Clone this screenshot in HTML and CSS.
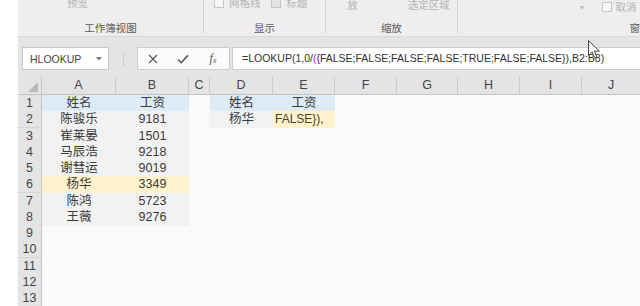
FILE: index.html
```html
<!DOCTYPE html>
<html lang="zh-CN">
<head>
    <meta charset="UTF-8">
    <meta name="viewport" content="width=device-width, initial-scale=1.0">
    <title>LOOKUP 查找工资</title>
    <link rel="stylesheet" href="styles.css">
</head>
<body>
<div class="window">
    <div class="ribbon">
        <div class="group g-view">
            <div class="items"><span class="item">预览</span></div>
            <div class="group-label">工作簿视图</div>
        </div>
        <div class="group g-show">
            <div class="items">
                <span class="item"><i class="box"></i>网格线</span>
                <span class="item"><i class="box checked"></i>标题</span>
            </div>
            <div class="group-label">显示</div>
        </div>
        <div class="group g-zoom">
            <div class="items">
                <span class="item">放</span>
                <span class="item">选定区域</span>
            </div>
            <div class="group-label">缩放</div>
        </div>
        <div class="group g-window">
            <div class="items">
                <span class="item caret">▾</span>
                <span class="item"><i class="box"></i>取消</span>
            </div>
            <div class="group-label">窗</div>
        </div>
    </div>

    <div class="formula-bar">
        <div class="name-box">
            <span>HLOOKUP</span>
            <svg class="nb-arrow" width="6" height="4" viewBox="0 0 6 4"><polygon points="0,0 6,0 3,3.5" fill="#7a7a7a"/></svg>
        </div>
        <div class="grip"></div>
        <div class="fx-buttons">
            <span class="fx-btn">
                <svg width="10" height="10" viewBox="0 0 10 10"><path d="M1 1 L9 9 M9 1 L1 9" stroke="#5c5c5c" stroke-width="1.3" fill="none"/></svg>
            </span>
            <span class="fx-btn">
                <svg width="12" height="10" viewBox="0 0 12 10"><path d="M1 5.5 L4.3 8.6 L11 1.4" stroke="#5c5c5c" stroke-width="1.6" fill="none"/></svg>
            </span>
            <span class="fx-btn fx-label">f<small>x</small></span>
        </div>
        <div class="formula">=LOOKUP(1,0/<span class="paren">(</span>{FALSE;FALSE;FALSE;FALSE;TRUE;FALSE;FALSE}),B2:B8)</div>
    </div>

    <div class="sheet">
        <div class="row head">
            <div class="corner"><svg width="10" height="10" viewBox="0 0 10 10"><polygon points="10,0 10,10 0,10" fill="#b8b8b8"/></svg></div>
            <div class="ch">A</div><div class="ch">B</div><div class="ch">C</div><div class="ch">D</div><div class="ch">E</div>
            <div class="ch">F</div><div class="ch">G</div><div class="ch">H</div><div class="ch">I</div><div class="ch last">J</div>
        </div>
        <div class="row">
            <div class="rh">1</div>
            <div class="c blue">姓名</div><div class="c blue">工资</div><div class="c"></div>
            <div class="c blue">姓名</div><div class="c blue">工资</div>
        </div>
        <div class="row">
            <div class="rh">2</div>
            <div class="c dim">陈骏乐</div><div class="c dim">9181</div><div class="c"></div>
            <div class="c dim">杨华</div><div class="c yellow edit">FALSE}),</div>
        </div>
        <div class="row">
            <div class="rh">3</div>
            <div class="c dim">崔莱晏</div><div class="c dim">1501</div>
        </div>
        <div class="row">
            <div class="rh">4</div>
            <div class="c dim">马辰浩</div><div class="c dim">9218</div>
        </div>
        <div class="row">
            <div class="rh">5</div>
            <div class="c dim">谢彗运</div><div class="c dim">9019</div>
        </div>
        <div class="row">
            <div class="rh">6</div>
            <div class="c yellow">杨华</div><div class="c yellow">3349</div>
        </div>
        <div class="row">
            <div class="rh">7</div>
            <div class="c dim">陈鸿</div><div class="c dim">5723</div>
        </div>
        <div class="row">
            <div class="rh">8</div>
            <div class="c dim">王薇</div><div class="c dim">9276</div>
        </div>
        <div class="row"><div class="rh">9</div></div>
        <div class="row"><div class="rh">10</div></div>
        <div class="row"><div class="rh">11</div></div>
        <div class="row"><div class="rh">12</div></div>
        <div class="row"><div class="rh">13</div></div>
    </div>

    <!-- mouse pointer over the formula bar -->
    <svg class="pointer" width="13" height="20" viewBox="0 0 13 20">
        <path d="M0.5 0.5 L0.5 15.5 L4.2 12 L6.8 18.2 L9 17.2 L6.4 11.2 L11.4 11.2 Z" fill="#fff" stroke="#444" stroke-width="1"/>
    </svg>
</div>
</body>
</html>
```

FILE: styles.css
```css
* {
    box-sizing: border-box;
    margin: 0;
    padding: 0;
}

body {
    background-color: #fff;
    font-family: 'Liberation Sans', 'Noto Sans CJK SC', sans-serif;
    color: #333;
    width: 640px;
    height: 306px;
    overflow: hidden;
}

.window {
    position: relative;
    width: 640px;
    height: 306px;
    overflow: hidden;
}

/* ribbon (cut off at the top) */
.ribbon {
    display: flex;
    align-items: flex-start;
    margin-left: 18px;
    height: 36px;
    background-color: #eeeeee;
    overflow: hidden;
    font-family: 'Noto Sans CJK SC', sans-serif;
}

.group {
    height: 33px;
    border-right: 1px solid #d2d2d2;
    display: flex;
    flex-direction: column;
}

.g-view { width: 187px; }
.g-show { width: 123px; }
.g-zoom { width: 132px; }
.g-window { flex: 1; border-right: none; }

.items {
    display: flex;
    align-items: center;
    height: 14px;
    font-size: 10.5px;
    line-height: 14px;
    color: #b4b4b4;
}

.item {
    display: flex;
    align-items: center;
    white-space: nowrap;
}

.box {
    display: inline-block;
    width: 10px;
    height: 10px;
    border: 1px solid #c4c4c4;
    background-color: #f7f7f7;
    margin-right: 5px;
}

.box.checked {
    background-color: #e2e2e2;
}

.g-view .items { padding-left: 49px; margin-top: -4px; margin-bottom: 4px; }
.g-show .items { padding-left: 10px; gap: 11px; margin-top: -4px; margin-bottom: 4px; }
.g-zoom .items { padding-left: 21px; gap: 50px; margin-top: -2px; margin-bottom: 2px; }
.g-window .items { padding-left: 122px; gap: 18px; }
.g-window .box { margin-right: 4px; }

.caret {
    font-size: 8px;
    color: #bcbcbc;
}

.group-label {
    margin-top: 7px;
    font-size: 10.5px;
    line-height: 14px;
    color: #5a5a5a;
    text-align: center;
    white-space: nowrap;
}

.g-window .group-label {
    text-align: left;
    padding-left: 172px;
}

/* formula bar */
.formula-bar {
    display: flex;
    align-items: flex-start;
    margin-left: 18px;
    height: 41px;
    padding: 10px 0 0 4px;
    background-color: #e4e4e4;
    border-top: 1px solid #dadada;
}

.name-box {
    display: flex;
    align-items: center;
    justify-content: space-between;
    width: 87px;
    height: 23px;
    padding: 0 6px 0 7px;
    background-color: #fff;
    border: 1px solid #c8c8c8;
    font-size: 10.5px;
    color: #444;
}

.grip {
    width: 1px;
    height: 13px;
    margin: 5px 13px 0 14px;
    border-left: 1px dotted #b4b4b4;
}

.fx-buttons {
    display: flex;
    width: 93px;
    height: 23px;
    background-color: #fbfbfb;
    border: 1px solid #cdcdcd;
}

.fx-btn {
    width: 30px;
    display: flex;
    align-items: center;
    justify-content: center;
}

.fx-label {
    font-family: 'Liberation Serif', serif;
    font-style: italic;
    font-size: 12px;
    color: #555;
}

.fx-label small {
    font-size: 8px;
    margin-top: 3px;
}

.formula {
    flex: 1;
    height: 23px;
    margin-left: 2px;
    padding-left: 9px;
    background-color: #fff;
    border: 1px solid #cdcdcd;
    border-right: none;
    font-size: 10.5px;
    line-height: 21px;
    color: #333;
    white-space: nowrap;
    overflow: hidden;
}

.paren {
    color: #c2306c;
}

/* sheet */
.sheet {
    margin-left: 18px;
    height: 229px;
    background-color: #fafafa;
}

.row {
    display: grid;
    grid-template-columns: 24px 74px 73px 21px 63px 62px 62px 61px 62px 62px 58px;
    height: 16.25px;
}

.row.head {
    height: 18px;
    background-color: #e4e4e4;
    border-bottom: 1px solid #c4c4c4;
}

.corner {
    display: flex;
    align-items: flex-end;
    justify-content: flex-end;
    padding: 0 3px 2px 0;
    border-right: 1px solid #c4c4c4;
}

.ch {
    text-align: center;
    font-size: 12.5px;
    line-height: 17px;
    color: #444;
    border-right: 1px solid #cbcbcb;
}

.ch.last {
    border-right: none;
}

.rh {
    text-align: center;
    font-size: 12.5px;
    line-height: 16px;
    color: #444;
    background-color: #e4e4e4;
    border-right: 1px solid #c4c4c4;
    border-bottom: 1px solid #d4d4d4;
}

.c {
    text-align: center;
    font-size: 12.5px;
    line-height: 16px;
    color: #3a3a3a;
    white-space: nowrap;
    overflow: hidden;
}

.c.blue {
    background-color: #ddebf7;
}

.c.yellow {
    background-color: #fff2cc;
}

.c.dim {
    background-color: #f2f2f2;
}

.c.edit {
    text-align: left;
    padding-left: 2px;
    font-size: 12px;
    color: #4a3f2a;
}

.pointer {
    position: absolute;
    left: 588px;
    top: 40px;
}
```
